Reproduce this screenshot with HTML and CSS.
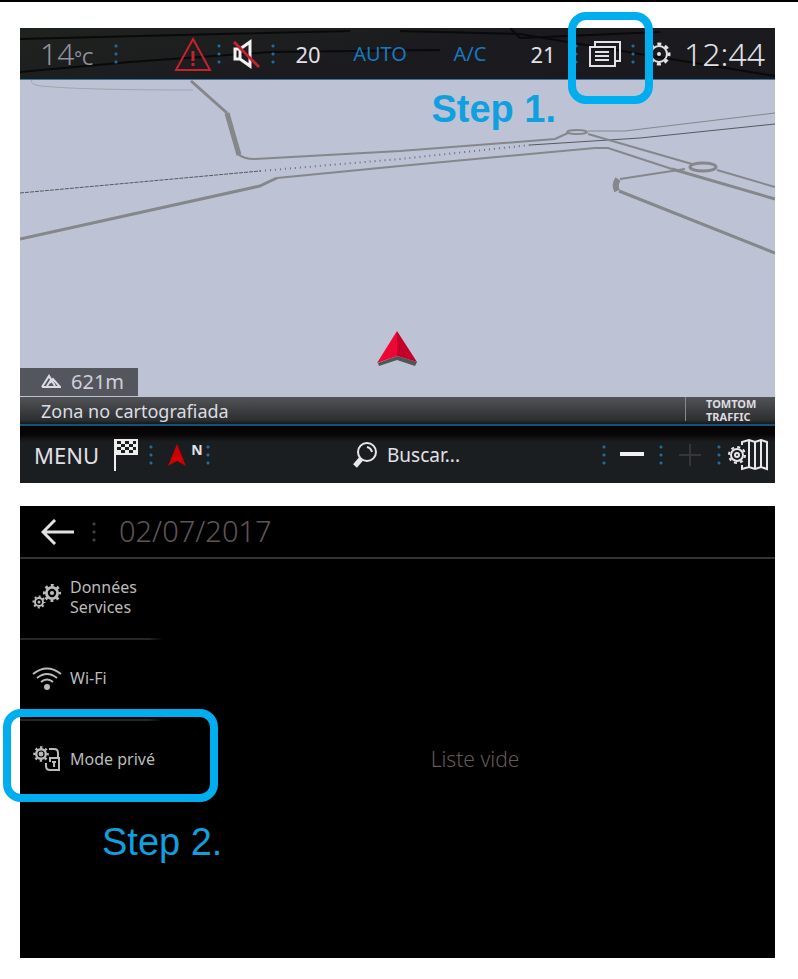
FILE: index.html
```html
<!DOCTYPE html>
<html lang="en">
<head>
<meta charset="utf-8">
<title>Private mode</title>
<link rel="stylesheet" href="styles.css">
</head>
<body>
<svg class="defs" aria-hidden="true">
  <defs>
    <g id="gear">
      <circle r="8" fill="none" stroke="currentColor" stroke-width="2"/>
      <circle r="10" fill="none" stroke="currentColor" stroke-width="3" stroke-dasharray="4 3.854" stroke-dashoffset="2"/>
      <circle r="2" fill="currentColor"/>
    </g>
    <g id="small-gear">
      <circle r="8" fill="none" stroke="currentColor" stroke-width="4"/>
      <circle r="11" fill="none" stroke="currentColor" stroke-width="4" stroke-dasharray="4 4.639" stroke-dashoffset="2"/>
      <circle r="3" fill="currentColor"/>
    </g>
  </defs>
</svg>
<main class="page">
  <section class="screen nav">
    <header class="status">
      <svg class="streaks" viewBox="0 0 755 51" preserveAspectRatio="none" fill="none" stroke="#090a0b" stroke-width="2"><path d="M0 11 200 6 330 3" /><path d="M0 44 110 34 250 24 420 22"/><path d="M380 3 500 6 620 26 755 48M490 0 500 10 640 4"/></svg>
      <span class="temp">14<small>°C</small></span>
      <i class="dots"></i>
      <svg class="warn" width="38" height="36" viewBox="0 0 38 36" fill="none" stroke="#c9202f" stroke-width="2"><path d="M19 3 36 34H2Z"/><path d="M19 15V25M19 27V30" stroke-width="3"/></svg>
      <i class="dots"></i>
      <button class="icon" aria-label="Mute"><svg width="28" height="30" viewBox="0 0 28 30" fill="none" stroke-width="3"><path d="M3 10H8V20H3ZM8 10 18 3V27L8 20" stroke="#f2f2f2"/><path d="M2 3 27 28" stroke="#c9202f"/></svg></button>
      <i class="dots"></i>
      <span class="value">20</span>
      <span class="mode">AUTO</span>
      <span class="mode">A/C</span>
      <span class="value">21</span>
      <i class="dots"></i>
      <div class="target">
        <button class="icon" aria-label="Notifications"><svg width="34" height="28" viewBox="0 0 34 28" fill="none" stroke="#e4e0ea" stroke-width="2"><path d="M7 7V2H32V21H27"/><path d="M2 7H27V26H2ZM7 12H21M7 16H21M7 20H21"/></svg></button>
        <span class="callout callout-top"></span>
      </div>
      <i class="dots"></i>
      <button class="icon" aria-label="Settings"><svg width="26" height="26" viewBox="-13 -13 26 26"><use href="#gear"/></svg></button>
      <time class="clock">12:44</time>
    </header>
    <div class="map">
      <svg class="roads" viewBox="0 0 755 317" preserveAspectRatio="none" fill="none" stroke="#85878b" stroke-width="2">
        <path d="M11 0Q11 5 21 6Q60 10 173 10" stroke="#a3a5ab" stroke-width="1"/>
        <path d="M171 1 207 33" stroke-width="3"/>
        <path d="M207 33 219 75" stroke-width="5"/>
        <path d="M218 74Q223 79 235 79L380 71 535 59 548 53"/>
        <ellipse cx="557" cy="52" rx="10" ry="2"/>
        <path d="M568 51H605L755 33" stroke-width="1"/>
        <path d="M0 159 240 106Q248 102 257 98" stroke-width="3"/>
        <path d="M257 98 380 86 575 68H588L652 89"/>
        <path d="M652 89 755 119" stroke-width="3"/>
        <path d="M0 113 240 91" stroke="#55595f" stroke-width="1" stroke-dasharray="4 1"/>
        <path d="M240 91 380 79 510 65" stroke="#6c6f75" stroke-dasharray="1 4"/>
        <path d="M510 65 620 58 755 44" stroke="#55595f" stroke-width="1"/>
        <path d="M568 54 672 84M697 90 755 107"/>
        <ellipse cx="683" cy="87" rx="13" ry="4" stroke-width="3"/>
        <path d="M665 89 600 99"/>
        <path d="M598 99Q594 105 597 111" stroke-width="6"/>
        <path d="M599 111 755 173" stroke-width="3"/>
      </svg>
      <p class="step step-one">Step 1.</p>
      <svg class="cursor" width="44" height="38" viewBox="0 0 44 38"><path d="M3 34 22 27 42 33 40 37 22 31 4 37Z" fill="#4c5757"/><path d="M22 2 42 33 22 27Z" fill="#c3002c"/><path d="M22 2 2 34 22 27Z" fill="#ee0735"/></svg>
      <div class="altitude"><svg width="20" height="14" viewBox="0 0 20 14" fill="none" stroke="#dcdce4" stroke-width="2"><path d="M1 13H19L12 5 9 9M1 13 8 2 14 12M6 12 10 6"/></svg>621m</div>
    </div>
    <div class="location"><span class="place">Zona no cartografiada</span><span class="traffic">TOMTOM TRAFFIC</span></div>
    <footer class="tools">
      <button class="menu">MENU</button>
      <button class="icon" aria-label="Destination"><svg width="26" height="34" viewBox="0 0 26 34"><path d="M2 1V33" stroke="#eee" stroke-width="2"/><path d="M1 1H25V17H1Z" fill="#eee"/><path d="M4 3h4v3h-4zM12 3h4v3h-4zM20 3h3v3h-3zM8 6h4v3h-4zM16 6h4v3h-4zM4 9h4v3h-4zM12 9h4v3h-4zM20 9h3v3h-3zM8 12h4v3h-4zM16 12h4v3h-4z" fill="#1c1f20"/></svg></button>
      <i class="dots"></i>
      <button class="icon compass" aria-label="North up"><svg width="20" height="24" viewBox="0 0 20 24"><path d="M10 1 19 23 10 18 1 23Z" fill="#cf0000"/></svg><b>N</b></button>
      <i class="dots"></i>
      <button class="search"><svg width="26" height="28" viewBox="0 0 26 28" fill="none" stroke="#e8e8ec" stroke-width="2"><circle cx="15" cy="11" r="9"/><path d="M15 6Q19 7 20 11"/><path d="M9 18 3 25" stroke-width="5"/></svg>Buscar...</button>
      <i class="dots"></i>
      <button class="icon" aria-label="Zoom out"><svg width="24" height="24"><path d="M0 11H24" stroke="#f0f0f4" stroke-width="4"/></svg></button>
      <i class="dots"></i>
      <button class="icon" aria-label="Zoom in"><svg width="24" height="24"><path d="M1 12H23M12 1V23" stroke="#34363a" stroke-width="2"/></svg></button>
      <i class="dots"></i>
      <button class="icon map-settings" aria-label="Map settings"><svg width="42" height="32" viewBox="0 0 42 32" fill="none" stroke="#e8e8ec" stroke-width="2"><path d="M15 6V3L22 1 28 3 34 1 40 3V30L34 28 28 30 22 28 15 30V26M22 1V28M28 3V30M34 1V28"/><g transform="translate(10 16)"><circle r="6"/><circle r="8" stroke-dasharray="3 3.283"/><circle r="2"/></g></svg></button>
    </footer>
  </section>

  <section class="screen notices">
    <header class="heading">
      <button class="icon" aria-label="Back"><svg width="34" height="26" viewBox="0 0 34 26" fill="none" stroke="#e2e2e2" stroke-width="3"><path d="M33 13H2M14 1 2 13 14 25"/></svg></button>
      <i class="dots grey"></i>
      <time>02/07/2017</time>
    </header>
    <div class="body">
      <nav class="side">
        <button class="item"><svg width="30" height="28" viewBox="0 0 30 28" color="#bbb"><g transform="translate(20 10) scale(.7)"><use href="#small-gear"/></g><g transform="translate(7 19) scale(.5)"><use href="#small-gear"/></g></svg><span>Données<br>Services</span></button>
        <button class="item"><svg width="30" height="24" viewBox="0 0 30 24" fill="none" stroke="#bbb" stroke-width="2"><path d="M1 8Q15-3 29 8M5 12Q15 4 25 12M9 16Q15 11 21 16"/><circle cx="15" cy="21" r="3" fill="#bbb" stroke="none"/></svg><span>Wi-Fi</span></button>
        <div class="target">
          <button class="item"><svg width="30" height="28" viewBox="0 0 30 28" fill="none" stroke="#bbb" stroke-width="2" color="#bbb"><g transform="translate(9 9) scale(.6)"><use href="#small-gear"/></g><path d="M17 4H22Q26 4 26 8V12M14 18V21Q14 25 18 25H27V13H18V17M22 16V22M20 17H24"/></svg><span>Mode privé</span></button>
          <span class="callout callout-side"></span>
        </div>
        <p class="step step-two">Step 2.</p>
      </nav>
      <p class="empty">Liste vide</p>
    </div>
  </section>
</main>
</body>
</html>
```

FILE: styles.css
```css
* { box-sizing: border-box; }
body { margin: 0; background: #fff; font-family: "Noto Sans", sans-serif; }
p { margin: 0; }
button { font: inherit; color: inherit; background: none; border: 0; padding: 0; cursor: pointer; }
svg { display: block; flex: none; }
.defs { position: absolute; width: 0; height: 0; }
.page { display: flex; flex-direction: column; gap: 23px; padding: 26px 23px 20px 20px; border-top: 2px solid #000; }
.screen { color: #e2e0e8; }

.status {
  position: relative;
  isolation: isolate;
  z-index: 1;
  display: grid;
  grid-template-columns:
    minmax(0, 88fr) minmax(0, 16fr) minmax(0, 88fr) minmax(0, 14fr) minmax(0, 40fr)
    minmax(0, 14fr) minmax(0, 56fr) minmax(0, 88fr) minmax(0, 92fr) minmax(0, 54fr)
    minmax(0, 12fr) minmax(0, 46fr) minmax(0, 10fr) minmax(0, 42fr) minmax(0, 95fr);
  align-items: center;
  justify-items: center;
  height: 52px;
  background: linear-gradient(170deg, #1f231e 0%, #1b1b1f 50%, #1a1a1e 100%);
  border-bottom: 1px solid #39759f;
}
.streaks { position: absolute; inset: 0; z-index: -1; width: 100%; height: 100%; }
.temp { justify-self: start; padding-left: 20px; font-size: 30px; font-weight: 300; color: #9391a1; white-space: nowrap; }
.temp small { font-size: 18px; font-weight: 400; }
.warn { justify-self: end; }
.value { font-size: 22px; }
.mode { font-size: 20px; color: #1679bd; }
.clock { padding-right: 6px; font-size: 32px; font-weight: 300; }
.icon { display: flex; align-items: center; justify-content: center; }
.dots {
  width: 4px;
  height: 20px;
  justify-self: center;
  background: radial-gradient(circle at 2px 2px, #206a9c 0 1px, transparent 2px) 0 0 / 4px 8px;
}
.grey { background: radial-gradient(circle at 2px 2px, #444 0 1px, transparent 2px) 0 0 / 4px 8px; }

.target { position: relative; }
.status .target { display: flex; align-items: center; justify-content: center; align-self: stretch; justify-self: stretch; }
.callout { position: absolute; z-index: 2; border: 8px solid #00aeef; border-radius: 18px; pointer-events: none; }
.callout-top { inset: -16px -25px -25px -14px; }
.callout-side { inset: -12px -48px 0 -17px; }

.map { position: relative; display: flex; flex-direction: column; justify-content: space-between; align-items: flex-start; height: 317px; padding-top: 7px; background: #bdc3d4; }
.roads { position: absolute; inset: 0; width: 100%; height: 100%; }
.step { position: relative; font-family: "Liberation Sans", sans-serif; font-size: 38px; line-height: 44px; color: #109fdf; white-space: nowrap; }
.step-one { margin-left: 54.5%; font-weight: 700; }
.cursor { position: absolute; left: 47%; top: 249px; }
.altitude { position: relative; display: flex; align-items: center; gap: 10px; height: 28px; margin-bottom: 1px; padding: 0 14px 2px 21px; background: #54565e; font-size: 20px; color: #d0d0da; }

.location { display: flex; align-items: stretch; height: 29px; background: linear-gradient(#515356, #2d2f31 85%, #16191b); border-bottom: 2px solid #175078; font-size: 18px; line-height: 28px; color: #dcdce2; }
.place { flex: 1; padding-left: 21px; }
.traffic { width: 90px; padding: 0 14px 0 21px; background: linear-gradient(#888, #888) 0 0 / 1px 24px no-repeat; font-size: 11px; line-height: 13px; font-weight: 700; }

.tools {
  display: grid;
  grid-template-columns:
    minmax(0, 88fr) minmax(0, 36fr) minmax(0, 13fr) minmax(0, 44fr) minmax(0, 14fr)
    minmax(0, 382fr) minmax(0, 14fr) minmax(0, 42fr) minmax(0, 15fr) minmax(0, 44fr)
    minmax(0, 13fr) minmax(0, 50fr);
  align-items: center;
  justify-items: center;
  height: 57px;
  background: linear-gradient(#060404 0 8px, #1b1e20 16px);
}
.menu { justify-self: start; padding-left: 14px; font-size: 22px; }
.compass { gap: 4px; align-items: flex-start; padding-left: 12px; }
.compass b { font-size: 14px; line-height: 14px; }
.search { display: flex; align-items: center; gap: 9px; font-size: 19px; }
.map-settings { padding-right: 5px; }

.notices { display: flex; flex-direction: column; min-height: 452px; background: #000; }
.heading { display: flex; align-items: center; gap: 17px; height: 53px; padding-left: 21px; border-bottom: 2px solid #333; }
.heading time { padding-left: 6px; padding-bottom: 2px; font-size: 29px; font-weight: 300; color: #5e5457; }
.body { flex: 1; display: grid; grid-template-columns: 150px 1fr; }
.item { display: grid; grid-template-columns: 30px 1fr; gap: 8px; align-items: center; width: 100%; height: 81px; padding: 0 0 5px 12px; background: linear-gradient(90deg, #262626 90%, #000) 0 100% / 143px 2px no-repeat; text-align: left; font-size: 16px; line-height: 20px; color: #bbb; }
.target .item { background: none; }
.step-two { margin: 18px 0 0 82px; }
.empty { align-self: center; justify-self: center; padding-left: 5px; font-size: 21px; font-weight: 300; color: #67585a; }
```
